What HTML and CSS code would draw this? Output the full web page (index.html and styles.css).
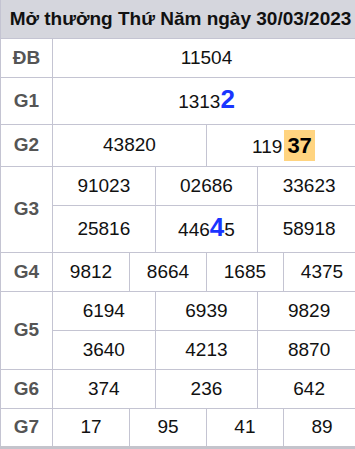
FILE: index.html
```html
<!DOCTYPE html>
<html lang="vi">
<head>
  <meta charset="UTF-8" />
  <meta name="viewport" content="width=device-width, initial-scale=1.0"/>
  <title>Kết quả xổ số</title>
  <link rel="stylesheet" href="styles.css">
</head>
<body>

  <table class="result-table">
    <colgroup>
      <col class="col-label">
      <col><col><col><col><col><col><col><col><col><col><col><col>
    </colgroup>
    <tr class="row-title">
      <th class="title" colspan="13">Mở thưởng Thứ Năm ngày 30/03/2023</th>
    </tr>
    <tr>
      <td class="label">ĐB</td>
      <td colspan="12">11504</td>
    </tr>
    <tr class="row-tall">
      <td class="label">G1</td>
      <td colspan="12">1313<span class="hit">2</span></td>
    </tr>
    <tr class="row-mid">
      <td class="label">G2</td>
      <td colspan="6">43820</td>
      <td colspan="6">119<span class="loto">37</span></td>
    </tr>
    <tr>
      <td class="label" rowspan="2">G3</td>
      <td colspan="4">91023</td>
      <td colspan="4">02686</td>
      <td colspan="4">33623</td>
    </tr>
    <tr class="row-tall">
      <td colspan="4">25816</td>
      <td colspan="4">446<span class="hit">4</span>5</td>
      <td colspan="4">58918</td>
    </tr>
    <tr>
      <td class="label">G4</td>
      <td colspan="3">9812</td>
      <td colspan="3">8664</td>
      <td colspan="3">1685</td>
      <td colspan="3">4375</td>
    </tr>
    <tr>
      <td class="label" rowspan="2">G5</td>
      <td colspan="4">6194</td>
      <td colspan="4">6939</td>
      <td colspan="4">9829</td>
    </tr>
    <tr>
      <td colspan="4">3640</td>
      <td colspan="4">4213</td>
      <td colspan="4">8870</td>
    </tr>
    <tr>
      <td class="label">G6</td>
      <td colspan="4">374</td>
      <td colspan="4">236</td>
      <td colspan="4">642</td>
    </tr>
    <tr class="last">
      <td class="label">G7</td>
      <td colspan="3">17</td>
      <td colspan="3">95</td>
      <td colspan="3">41</td>
      <td colspan="3">89</td>
    </tr>
  </table>

</body>
</html>
```

FILE: styles.css
```css
* {
  box-sizing: border-box;
}

body {
  margin: 0;
  overflow: hidden;
  background: white;
  font-family: 'Liberation Sans', Arial, sans-serif;
}

.result-table {
  width: 361px;
  table-layout: fixed;
  border-collapse: collapse;
}

.col-label {
  width: 52px;
}

.result-table tr {
  height: 39px;
}

.result-table .row-title {
  height: 38px;
}

.result-table .row-tall {
  height: 47px;
}

.result-table .row-mid {
  height: 42px;
}

.result-table th,
.result-table td {
  border: 1px solid #c4c4d2;
  text-align: center;
  vertical-align: middle;
  padding: 0;
  font-size: 19px;
  line-height: 20px;
  color: #111;
}

.result-table .title {
  background: #d5d6dd;
  font-size: 19px;
  font-weight: bold;
  color: #111;
  border-top: none;
}

.result-table .label {
  font-weight: bold;
  color: #555;
}

.hit {
  color: #1a35ff;
  font-weight: bold;
  font-size: 26px;
}

.loto {
  display: inline-block;
  background: #ffd480;
  font-weight: bold;
  font-size: 22px;
  line-height: 21px;
  padding: 5px 3px;
  margin-left: 2px;
  color: #000;
}

.last td {
  border-bottom: 3px solid #c4c4cc;
}
```
